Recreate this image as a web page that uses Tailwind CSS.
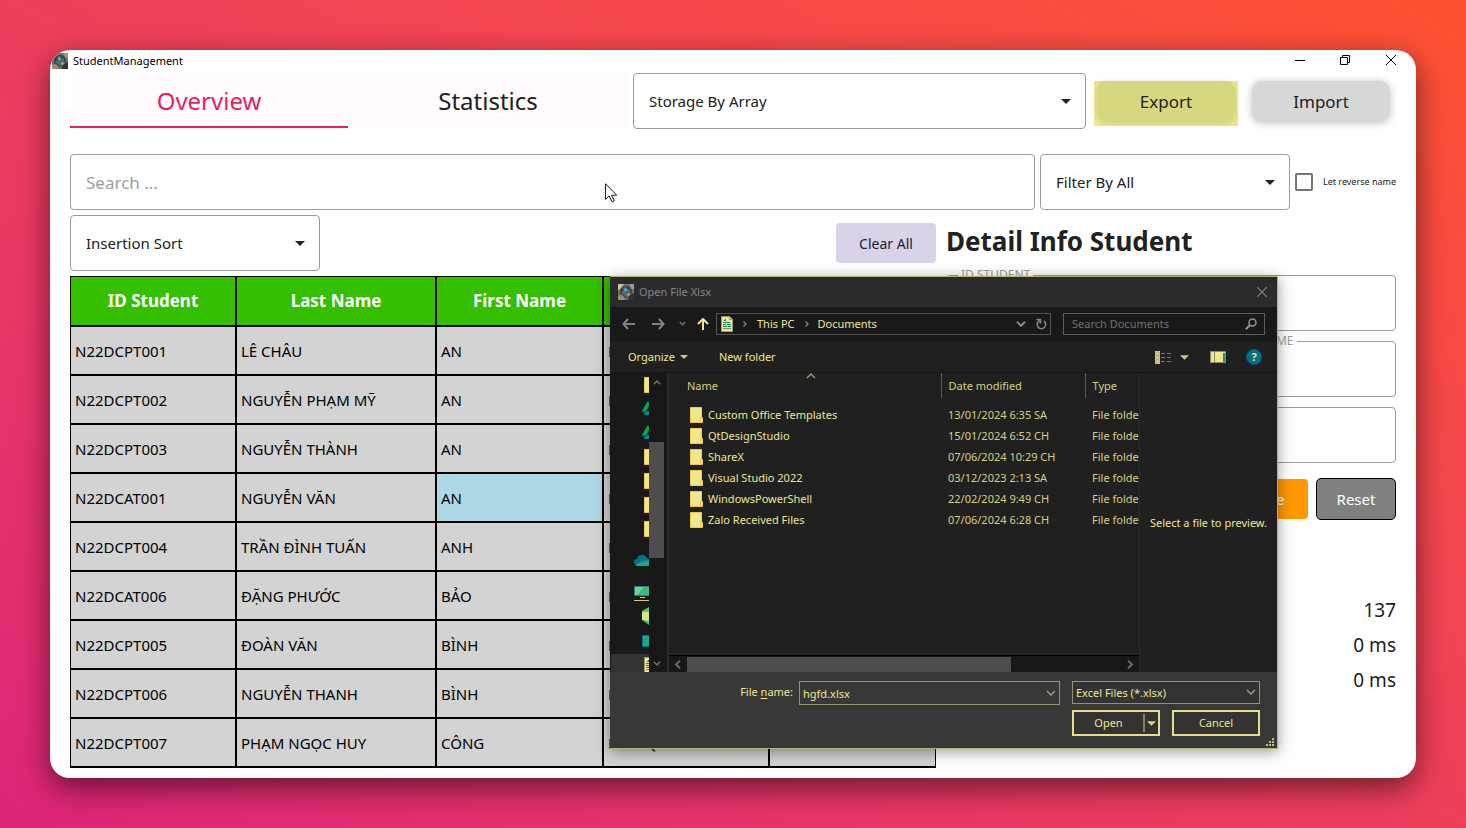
<!DOCTYPE html>
<html lang="en">
<head>
<meta charset="utf-8">
<meta name="viewport" content="width=device-width, initial-scale=1">
<title>StudentManagement</title>
<script src="https://cdn.jsdelivr.net/npm/@tailwindcss/browser@4"></script>
</head>
<body class="min-h-screen flex p-[50px] bg-linear-to-tr from-[#dd2476] to-[#ff512f] font-['Noto_Sans','Open_Sans',sans-serif] text-[#212121]">

<svg class="hidden" aria-hidden="true">
  <symbol id="app" viewBox="0 0 16 16">
    <rect width="16" height="16" fill="#6b6f68"/>
    <path d="M0 0h6L3 4 0 7z" fill="#c9bda4"/><path d="M11 0h5v6l-3-2z" fill="#9c9a88"/>
    <circle cx="8" cy="8" r="6" fill="#33424a"/><path d="M3 9l4-5 5 2 1 5-4 3z" fill="#566669"/>
    <path d="M5 4l3-1 2 3-3 2z" fill="#2d8fae"/><path d="M7 5h1v2H7z" fill="#8fe0e8"/>
    <path d="M0 12l4-1 3 3-1 2H0z" fill="#a08b72"/><path d="M11 12l5-3v7h-6z" fill="#3a302b"/><path d="M9 10l2-1 1 2-2 1z" fill="#b9b09a"/>
  </symbol>
  <symbol id="folder" viewBox="0 0 13 16">
    <path d="M.5.5h11v10h1v5H.5z" fill="#f0e68c" stroke="#eec94d"/><path d="M10.500 15.500v-5h1.500" fill="none" stroke="#eec94d"/>
  </symbol>
  <symbol id="doc" viewBox="0 0 12 16">
    <path d="M.5.5h8l3 3v12H.5z" fill="#f0e68c" stroke="#a29c6a"/><path d="M8.500.5v3h3" fill="#c9c27c" stroke="#a29c6a"/>
    <path d="M3 4.500h2M4 3.500h1M2 6.500h7M2 8.500h3M6 8.500h4M2 10.500h4M7 10.500h3" stroke="#0b8574" fill="none"/><path d="M2 12.500h8" stroke="#8b8a60" fill="none"/>
  </symbol>
  <symbol id="caret" viewBox="0 0 10 5"><path d="M0 0h10L5 5z" fill="currentColor"/></symbol>
  <symbol id="chev" viewBox="0 0 10 6"><path d="M1 1l4 4 4-4" fill="none" stroke="currentColor" stroke-width="1.300"/></symbol>
  <symbol id="chevbold" viewBox="0 0 10 6"><path d="M1 .8l4 4 4-4" fill="none" stroke="currentColor" stroke-width="2"/></symbol>
  <symbol id="drive" viewBox="0 0 14 14">
    <path d="M5 0h4L4.500 9H0z" fill="#00a84f"/><path d="M0 9h9l-2 4H2.500z" fill="#00647e"/><path d="M2.500 13L5 9h9l-2 4z" fill="#14808c"/>
  </symbol>
</svg>

<main class="relative flex-1 min-w-0 flex flex-col bg-white rounded-[20px] shadow-[0_10px_30px_rgba(0,0,0,0.55)]">
  <header class="h-[23px] flex items-start justify-between rounded-t-[20px] overflow-hidden shrink-0 pl-0.5">
    <div class="flex items-center gap-[5px] pt-[3px]">
      <svg class="size-4"><use href="#app"/></svg>
      <h1 class="text-[11px] leading-4 text-black">StudentManagement</h1>
    </div>
    <div class="flex pr-0.5 text-black">
      <button class="w-[45px] h-5 grid place-items-center" aria-label="Minimize"><svg class="w-2.5 h-2.5" viewBox="0 0 10 10"><path d="M0 5.500h10" stroke="currentColor"/></svg></button>
      <button class="w-[46px] h-5 grid place-items-center" aria-label="Restore"><svg class="w-2.5 h-2.5" viewBox="0 0 10 10" fill="none" stroke="currentColor"><path d="M.5 2.500h7v7h-7zM2.500 2.500v-2h7v7h-2"/></svg></button>
      <button class="w-[46px] h-5 grid place-items-center" aria-label="Close"><svg class="w-2.5 h-2.5" viewBox="0 0 10 10"><path d="M0 0l10 10M10 0L0 10" stroke="currentColor"/></svg></button>
    </div>
  </header>

  <div class="px-5 pb-2.5 flex flex-col">
    <div class="flex">
      <nav class="flex w-[558px] h-[55px] bg-[#fffbfe] text-[24px] mr-[5px] shrink-0" role="tablist">
        <button role="tab" aria-selected="true" class="w-[278px] pt-[3px] text-[#e91e63] border-b-2 border-[#e91e63]">Overview</button>
        <button role="tab" aria-selected="false" class="w-[280px] pt-[3px] border-b-2 border-transparent">Statistics</button>
      </nav>
      <div class="relative flex-1">
        <select aria-label="Storage" class="appearance-none w-full h-14 border border-[#9a9a9a] rounded-[4px] px-[15px] text-[15px] bg-white"><option>Storage By Array</option></select>
        <svg class="absolute right-[15px] top-[26px] w-2.5 h-[5px] pointer-events-none"><use href="#caret"/></svg>
      </div>
      <div class="ml-2 mt-2 w-36 h-[45px] px-[3px] bg-[#f0e68c] shrink-0">
        <button class="w-full h-[41px] rounded-[10px] bg-[#d6d880] text-[17px] shadow-[0_1px_6px_rgba(120,130,60,0.25)]">Export</button>
      </div>
      <button class="ml-3.5 mt-2 mr-1.5 w-[138px] h-[41px] rounded-[10px] bg-[#d6d8d7] text-[17px] shrink-0 shadow-[0_1px_8px_rgba(0,0,0,0.25)]">Import</button>
    </div>

    <div class="flex gap-[5px] mt-[25px]">
      <input type="text" aria-label="Search" placeholder="Search ..." class="flex-1 min-w-0 h-14 border border-[#9a9a9a] rounded-[4px] px-[15px] text-[17px] placeholder:text-[#9e9e9e]">
      <div class="relative w-[250px]">
        <select aria-label="Filter" class="appearance-none w-full h-14 border border-[#9a9a9a] rounded-[4px] px-[15px] text-[15px] bg-white"><option>Filter By All</option></select>
        <svg class="absolute right-[15px] top-[26px] w-2.5 h-[5px] pointer-events-none"><use href="#caret"/></svg>
      </div>
      <label class="w-[101px] flex items-center justify-between text-[9px] whitespace-nowrap">
        <input type="checkbox" class="appearance-none size-[18px] border-2 border-[#757575] rounded-[2px] shrink-0">Let reverse name
      </label>
    </div>

    <div class="flex gap-2.5 mt-[5px]">
      <section class="flex-1 min-w-0">
        <div class="flex justify-between items-center">
          <div class="relative w-[250px]">
            <select aria-label="Sort" class="appearance-none w-full h-14 border border-[#9a9a9a] rounded-[4px] px-[15px] text-[15px] bg-white"><option>Insertion Sort</option></select>
            <svg class="absolute right-[15px] top-[26px] w-2.5 h-[5px] pointer-events-none"><use href="#caret"/></svg>
          </div>
          <button class="w-[100px] h-10 rounded-[4px] bg-[#d9d2e9] text-[14px]">Clear All</button>
        </div>
        <table class="mt-[5px] w-full table-fixed border-separate border-spacing-0 border-b border-black bg-[#d3d3d3] text-left text-[15px] text-black [&_td]:h-[49px] [&_td]:border [&_td]:border-black [&_td]:px-1 [&_td]:pt-0.5 [&_td]:pb-0 [&_th]:border [&_th]:border-black [&_th]:h-[50px]">
          <colgroup><col class="w-[166px]"><col class="w-[200px]"><col class="w-[167px]"><col class="w-[166px]"><col></colgroup>
          <thead><tr class="bg-[#34c000] text-white text-[17px] text-center"><th>ID Student</th><th>Last Name</th><th>First Name</th><th></th><th></th></tr></thead>
          <tbody>
            <tr><td>N22DCPT001</td><td>LÊ CHÂU</td><td>AN</td><td>D</td><td></td></tr>
            <tr><td>N22DCPT002</td><td>NGUYỄN PHẠM MỸ</td><td>AN</td><td>D</td><td></td></tr>
            <tr><td>N22DCPT003</td><td>NGUYỄN THÀNH</td><td>AN</td><td>D</td><td></td></tr>
            <tr><td>N22DCAT001</td><td>NGUYỄN VĂN</td><td class="bg-[#add8e6]">AN</td><td>D</td><td></td></tr>
            <tr><td>N22DCPT004</td><td>TRẦN ĐÌNH TUẤN</td><td>ANH</td><td>D</td><td></td></tr>
            <tr><td>N22DCAT006</td><td>ĐẶNG PHƯỚC</td><td>BẢO</td><td>D</td><td></td></tr>
            <tr><td>N22DCPT005</td><td>ĐOÀN VĂN</td><td>BÌNH</td><td>D</td><td></td></tr>
            <tr><td>N22DCPT006</td><td>NGUYỄN THANH</td><td>BÌNH</td><td>D</td><td></td></tr>
            <tr><td>N22DCPT007</td><td>PHẠM NGỌC HUY</td><td>CÔNG</td><td>D22CQPT01-N</td><td>0</td></tr>
          </tbody>
        </table>
      </section>

      <section class="w-[450px] shrink-0 flex flex-col">
        <h2 class="h-[60px] pt-2 text-[26px] leading-9 font-bold">Detail Info Student</h2>
        <div class="flex flex-col gap-2.5">
          <div class="relative">
            <label for="sid" class="absolute left-3 -top-2 px-[3px] bg-white text-[12px] leading-4 text-[#9e9e9e]">ID STUDENT</label>
            <input id="sid" type="text" class="w-full h-14 border border-[#9a9a9a] rounded-[4px] px-[15px]">
          </div>
          <div class="flex gap-[5px]">
            <div class="relative flex-1">
              <label for="lname" class="absolute left-3 -top-2 px-[3px] bg-white text-[12px] leading-4 text-[#9e9e9e]">LAST NAME</label>
              <input id="lname" type="text" class="w-full h-14 border border-[#9a9a9a] rounded-[4px] px-[15px]">
            </div>
            <div class="relative w-[186px]">
              <label for="fname" class="absolute left-3 -top-2 px-[3px] bg-white text-[12px] leading-4 text-[#9e9e9e]">FIRST NAME</label>
              <input id="fname" type="text" class="w-full h-14 border border-[#9a9a9a] rounded-[4px] px-[15px]">
            </div>
          </div>
          <input type="text" aria-label="Class" class="w-full h-14 border border-[#9a9a9a] rounded-[4px] px-[15px]">
        </div>
        <div class="flex justify-end items-center gap-2 mt-[15px] text-white text-[15px]">
          <button class="w-20 h-10 rounded-[4px] bg-[#ff9800]">Save</button>
          <button class="w-20 h-[42px] rounded-[5px] border border-black bg-[#808080]">Reset</button>
        </div>
        <div class="mt-[73px] text-right text-[19px] leading-[35px]">
          <p>137</p><p>0 ms</p><p>0 ms</p>
        </div>
      </section>
    </div>
  </div>

  <svg class="absolute left-[555px] top-[133px] w-[13px] h-5" viewBox="0 0 13 20" aria-hidden="true"><path d="M.5.7v15.800l3.700-3.600 2.900 6 2.300-1.100-2.800-5.600h5.100z" fill="#fff" stroke="#1a1a2a"/></svg>

  <section role="dialog" aria-label="Open File Xlsx" class="absolute left-[560px] top-[226px] w-[668px] h-[473px] flex flex-col border-t border-r border-b border-[#b5b06c] bg-[#202020] text-[#f0e68c] text-[11px] leading-4 shadow-[0_3px_14px_rgba(0,0,0,0.4)]">
    <div class="h-[30px] shrink-0 bg-[#2b2b2b] flex items-center pl-2 pr-2.5 pb-px text-[#858585]">
      <svg class="size-4 mr-[5px]"><use href="#app"/></svg>
      <span class="flex-1">Open File Xlsx</span>
      <button aria-label="Close dialog"><svg class="size-2.5" viewBox="0 0 10 10"><path d="M0 0l10 10M10 0L0 10" stroke="#858585" stroke-width="1.200"/></svg></button>
    </div>
    <div class="h-[35px] shrink-0 bg-[#191919] flex items-center pl-3 pr-3 pb-0.5">
      <button aria-label="Back" class="w-[30px]"><svg class="w-[13px] h-3" viewBox="0 0 13 12" fill="none" stroke="#85837a" stroke-width="2"><path d="M6 1L1.500 6 6 11M2 6h11"/></svg></button>
      <button aria-label="Forward" class="w-[27px]"><svg class="w-[13px] h-3" viewBox="0 0 13 12" fill="none" stroke="#85837a" stroke-width="2"><path d="M7 1l4.500 5L7 11M11 6H0"/></svg></button>
      <button aria-label="Recent" class="w-[18px] text-[#74736c]"><svg class="w-[7px] h-[5px]"><use href="#chevbold"/></svg></button>
      <button aria-label="Up" class="w-[19px]"><svg class="w-3 h-3" viewBox="0 0 12 12" fill="none" stroke="#f0e68c" stroke-width="2"><path d="M1 6l5-5 5 5M6 1.500V12"/></svg></button>
      <div class="flex-1 h-[22px] border border-[#535353] flex items-center pl-1">
        <svg class="w-3 h-4"><use href="#doc"/></svg>
        <svg class="w-1 h-1.5 mx-[10px]" viewBox="0 0 4 6"><path d="M.5.5L3 3 .5 5.500" fill="none" stroke="#85837a" stroke-width="1.400"/></svg>
        <a href="#" class="mr-2.5">This PC</a>
        <svg class="w-1 h-1.5 mr-[9px]" viewBox="0 0 4 6"><path d="M.5.5L3 3 .5 5.500" fill="none" stroke="#85837a" stroke-width="1.400"/></svg>
        <a href="#" class="flex-1">Documents</a>
        <button aria-label="Previous locations" class="w-[15px] text-[#8d8b80]"><svg class="w-2.5 h-1.5"><use href="#chevbold"/></svg></button>
        <button aria-label="Refresh" class="w-[19px] grid place-items-center"><svg class="w-3 h-3" viewBox="0 0 12 12" fill="none" stroke="#85837a" stroke-width="1.600"><path d="M9 3.200A4.200 4.200 0 1 1 4.500 2.800M1.500 1.500h4v4"/></svg></button>
      </div>
      <div class="relative ml-3 w-[202px]">
        <input type="text" aria-label="Search Documents" placeholder="Search Documents" class="block w-full h-[22px] bg-transparent border border-[#5b5b5b] pl-2 placeholder:text-[#6f6f6f]">
        <svg class="absolute right-2 top-[5px] w-3 h-3" viewBox="0 0 12 12" fill="none" stroke="#96948a"><circle cx="7.500" cy="4.500" r="3.500" stroke-width="1.500"/><path d="M5 7L.8 11.200" stroke-width="2"/></svg>
      </div>
    </div>
    <div class="h-[30px] shrink-0 flex items-center pl-[18px] pr-[15px]">
      <button class="flex items-center gap-[5px] w-[91px]">Organize <svg class="w-2 h-1 text-[#d0c878]"><use href="#caret"/></svg></button>
      <button>New folder</button>
      <button aria-label="Change view" class="ml-auto flex items-center gap-[9px]">
        <svg class="w-4 h-[13px]" viewBox="0 0 16 13"><path d="M0 0h5v13H0z" fill="#e0d784"/><path d="M1 1h3v3H1zM1 5h3v3H1zM1 9h3v3H1z" fill="#f0e68c" stroke="#8b873f" stroke-width=".6"/><path d="M6 2.500h4M12 2.500h4M6 6.500h4M12 6.500h4M6 10.500h4M12 10.500h4" stroke="#77766c"/></svg>
        <svg class="w-[9px] h-[5px] text-[#d0c878]"><use href="#caret"/></svg>
      </button>
      <button aria-label="Preview pane" class="ml-[21px]"><svg class="w-4 h-3" viewBox="0 0 16 12"><path d="M.5.5h15v11H.5z" fill="#f0e68c" stroke="#8b8a6a"/><path d="M4.500 1v10" stroke="#8b8a6a"/><path d="M13 2h2v9h-2z" fill="#1d9277"/></svg></button>
      <button aria-label="Help" class="ml-5 size-4 rounded-full bg-[#00708a] border border-[#005a8c] font-bold text-[11px] leading-[14px]">?</button>
    </div>

    <div class="flex flex-1 min-h-0 border-t border-[#151515]">
      <div class="w-[39px] bg-[#191919] overflow-hidden shrink-0">
        <svg class="w-[39px] h-[299px]" viewBox="0 0 39 299" aria-hidden="true">
          <path d="M1 281h38v18H1z" fill="#333"/>
          <use href="#folder" x="34" y="4" width="13" height="16"/>
          <use href="#drive" x="32" y="29" width="14" height="14"/>
          <use href="#drive" x="32" y="53" width="14" height="14"/>
          <use href="#folder" x="34" y="76" width="13" height="16"/>
          <use href="#folder" x="34" y="100" width="13" height="16"/>
          <use href="#folder" x="34" y="124" width="13" height="16"/>
          <use href="#folder" x="34" y="148" width="13" height="16"/>
          <path d="M24 190a3 3 0 0 1 3-4 5 5 0 0 1 9-2l3 2v7H26z" fill="#00728a"/><path d="M26 193c1-3 5-4 8-5l5-1v6z" fill="#1ca584"/>
          <path d="M24.500 213.500H41v9H24.500z" fill="#3fb77e" stroke="#2b7f86"/><path d="M25 214h9l-7 8h-2z" fill="#7bcf84"/><path d="M30 224.500h5M24 227.500h15" stroke="#cfc97f"/>
          <path d="M32 238l7-4v6l-7 1z" fill="#4fc382"/><path d="M32 239h7v10l-7-2z" fill="#d0e87f"/><path d="M32 247l7 1v4z" fill="#3fbf86"/>
          <path d="M32.500 262.500H41v11h-8.500z" fill="#1aa886" stroke="#00708a"/>
          <use href="#doc" x="34" y="284" width="12" height="16"/>
        </svg>
      </div>
      <div class="w-[18px] bg-[#171717] flex flex-col items-center pr-[3px] text-[#6a6a6a] shrink-0">
        <svg class="w-2 h-[5px] mt-[7px] rotate-180"><use href="#chevbold"/></svg>
        <div class="mt-[57px] w-[15px] h-[116px] bg-[#4d4d4d]"></div>
        <svg class="w-2 h-[5px] mt-auto mb-1.5"><use href="#chevbold"/></svg>
      </div>
      <div class="flex-1 min-w-0 flex flex-col border-l-2 border-[#2b2b2b] relative">
        <svg class="absolute left-[137px] top-0 w-2.5 h-1.5 rotate-180 text-[#a5a179]"><use href="#chev"/></svg>
        <div class="flex-1 min-h-0 overflow-hidden">
          <table class="w-[520px] table-fixed text-left whitespace-nowrap [&_td]:h-[21px] [&_td]:p-0 [&_td]:pl-[7px]">
            <colgroup><col class="w-[272px]"><col class="w-36"><col></colgroup>
            <thead><tr class="[&_th]:font-normal [&_th]:h-[25px] [&_th]:pl-[7px] text-[#d8cf7e]"><th><span class="pl-[11px]">Name</span></th><th class="border-l border-[#5c5c5c]">Date modified</th><th class="border-l border-[#5c5c5c]">Type</th></tr></thead>
            <tbody class="before:block before:h-1.5">
              <tr><td><span class="flex items-center gap-[5px] pl-3.5"><svg class="w-[13px] h-4"><use href="#folder"/></svg>Custom Office Templates</span></td><td class="text-[#d8cf7e]">13/01/2024 6:35 SA</td><td class="text-[#d8cf7e]">File folder</td></tr>
              <tr><td><span class="flex items-center gap-[5px] pl-3.5"><svg class="w-[13px] h-4"><use href="#folder"/></svg>QtDesignStudio</span></td><td class="text-[#d8cf7e]">15/01/2024 6:52 CH</td><td class="text-[#d8cf7e]">File folder</td></tr>
              <tr><td><span class="flex items-center gap-[5px] pl-3.5"><svg class="w-[13px] h-4"><use href="#folder"/></svg>ShareX</span></td><td class="text-[#d8cf7e]">07/06/2024 10:29 CH</td><td class="text-[#d8cf7e]">File folder</td></tr>
              <tr><td><span class="flex items-center gap-[5px] pl-3.5"><svg class="w-[13px] h-4"><use href="#folder"/></svg>Visual Studio 2022</span></td><td class="text-[#d8cf7e]">03/12/2023 2:13 SA</td><td class="text-[#d8cf7e]">File folder</td></tr>
              <tr><td><span class="flex items-center gap-[5px] pl-3.5"><svg class="w-[13px] h-4"><use href="#folder"/></svg>WindowsPowerShell</span></td><td class="text-[#d8cf7e]">22/02/2024 9:49 CH</td><td class="text-[#d8cf7e]">File folder</td></tr>
              <tr><td><span class="flex items-center gap-[5px] pl-3.5"><svg class="w-[13px] h-4"><use href="#folder"/></svg>Zalo Received Files</span></td><td class="text-[#d8cf7e]">07/06/2024 6:28 CH</td><td class="text-[#d8cf7e]">File folder</td></tr>
            </tbody>
          </table>
        </div>
        <div class="h-[17px] shrink-0 bg-[#171717] border-t border-black flex items-center justify-between pl-[5px] pr-[5px] text-[#6a6a6a]">
          <svg class="w-[7px] h-[9px]" viewBox="0 0 7 9"><path d="M6 .8L2 4.500 6 8.200" fill="none" stroke="currentColor" stroke-width="2"/></svg>
          <div class="mr-auto ml-1.5 w-[324px] h-[15px] bg-[#4d4d4d]"></div>
          <svg class="w-[7px] h-[9px]" viewBox="0 0 7 9"><path d="M1 .8l4 3.700-4 3.700" fill="none" stroke="currentColor" stroke-width="2"/></svg>
        </div>
      </div>
      <div class="w-[138px] shrink-0 border-l border-[#2b2b2b] grid place-items-center whitespace-nowrap">Select a file to preview.</div>
    </div>

    <div class="h-[76px] shrink-0 bg-[#383838] pt-[9px] pr-[17px] flex flex-col gap-[5px] relative">
      <div class="flex justify-end items-start">
        <label for="fn" class="mr-1.5 mt-[3px]">File <u class="underline-offset-2">n</u>ame:</label>
        <div class="relative w-[261px]">
          <input id="fn" type="text" value="hgfd.xlsx" class="block w-full h-6 bg-[#383838] border border-[#96926a] pl-[3px]">
          <svg class="absolute right-1 top-[9px] w-2.5 h-1.5 text-[#a5a179]"><use href="#chev"/></svg>
        </div>
        <div class="relative w-[188px] ml-3">
          <select aria-label="File type" class="appearance-none block w-full h-[23px] bg-[#333] border border-[#96926a] pl-[3px]"><option>Excel Files (*.xlsx)</option></select>
          <svg class="absolute right-1 top-2 w-2.5 h-1.5 text-[#a5a179] pointer-events-none"><use href="#chev"/></svg>
        </div>
      </div>
      <div class="flex justify-end gap-3">
        <div class="w-[88px] h-[26px] flex items-center border-2 border-[#e8de88] bg-[#333]">
          <button class="flex-1">Open</button>
          <button aria-label="Open options" class="h-[18px] border-l-2 border-[#85825c] pl-0.5 pr-0.5"><svg class="w-[9px] h-[5px] text-[#e0d784]"><use href="#caret"/></svg></button>
        </div>
        <button class="w-[88px] h-[26px] border-2 border-[#e8de88] bg-[#333]">Cancel</button>
      </div>
      <svg class="absolute right-[3px] bottom-0.5 w-2 h-2" viewBox="0 0 8 8" fill="#c5be76" aria-hidden="true"><path d="M6 0h2v2H6zM3 3h2v2H3zM6 3h2v2H6zM0 6h2v2H0zM3 6h2v2H3zM6 6h2v2H6z"/></svg>
    </div>
  </section>
</main>
</body>
</html>
